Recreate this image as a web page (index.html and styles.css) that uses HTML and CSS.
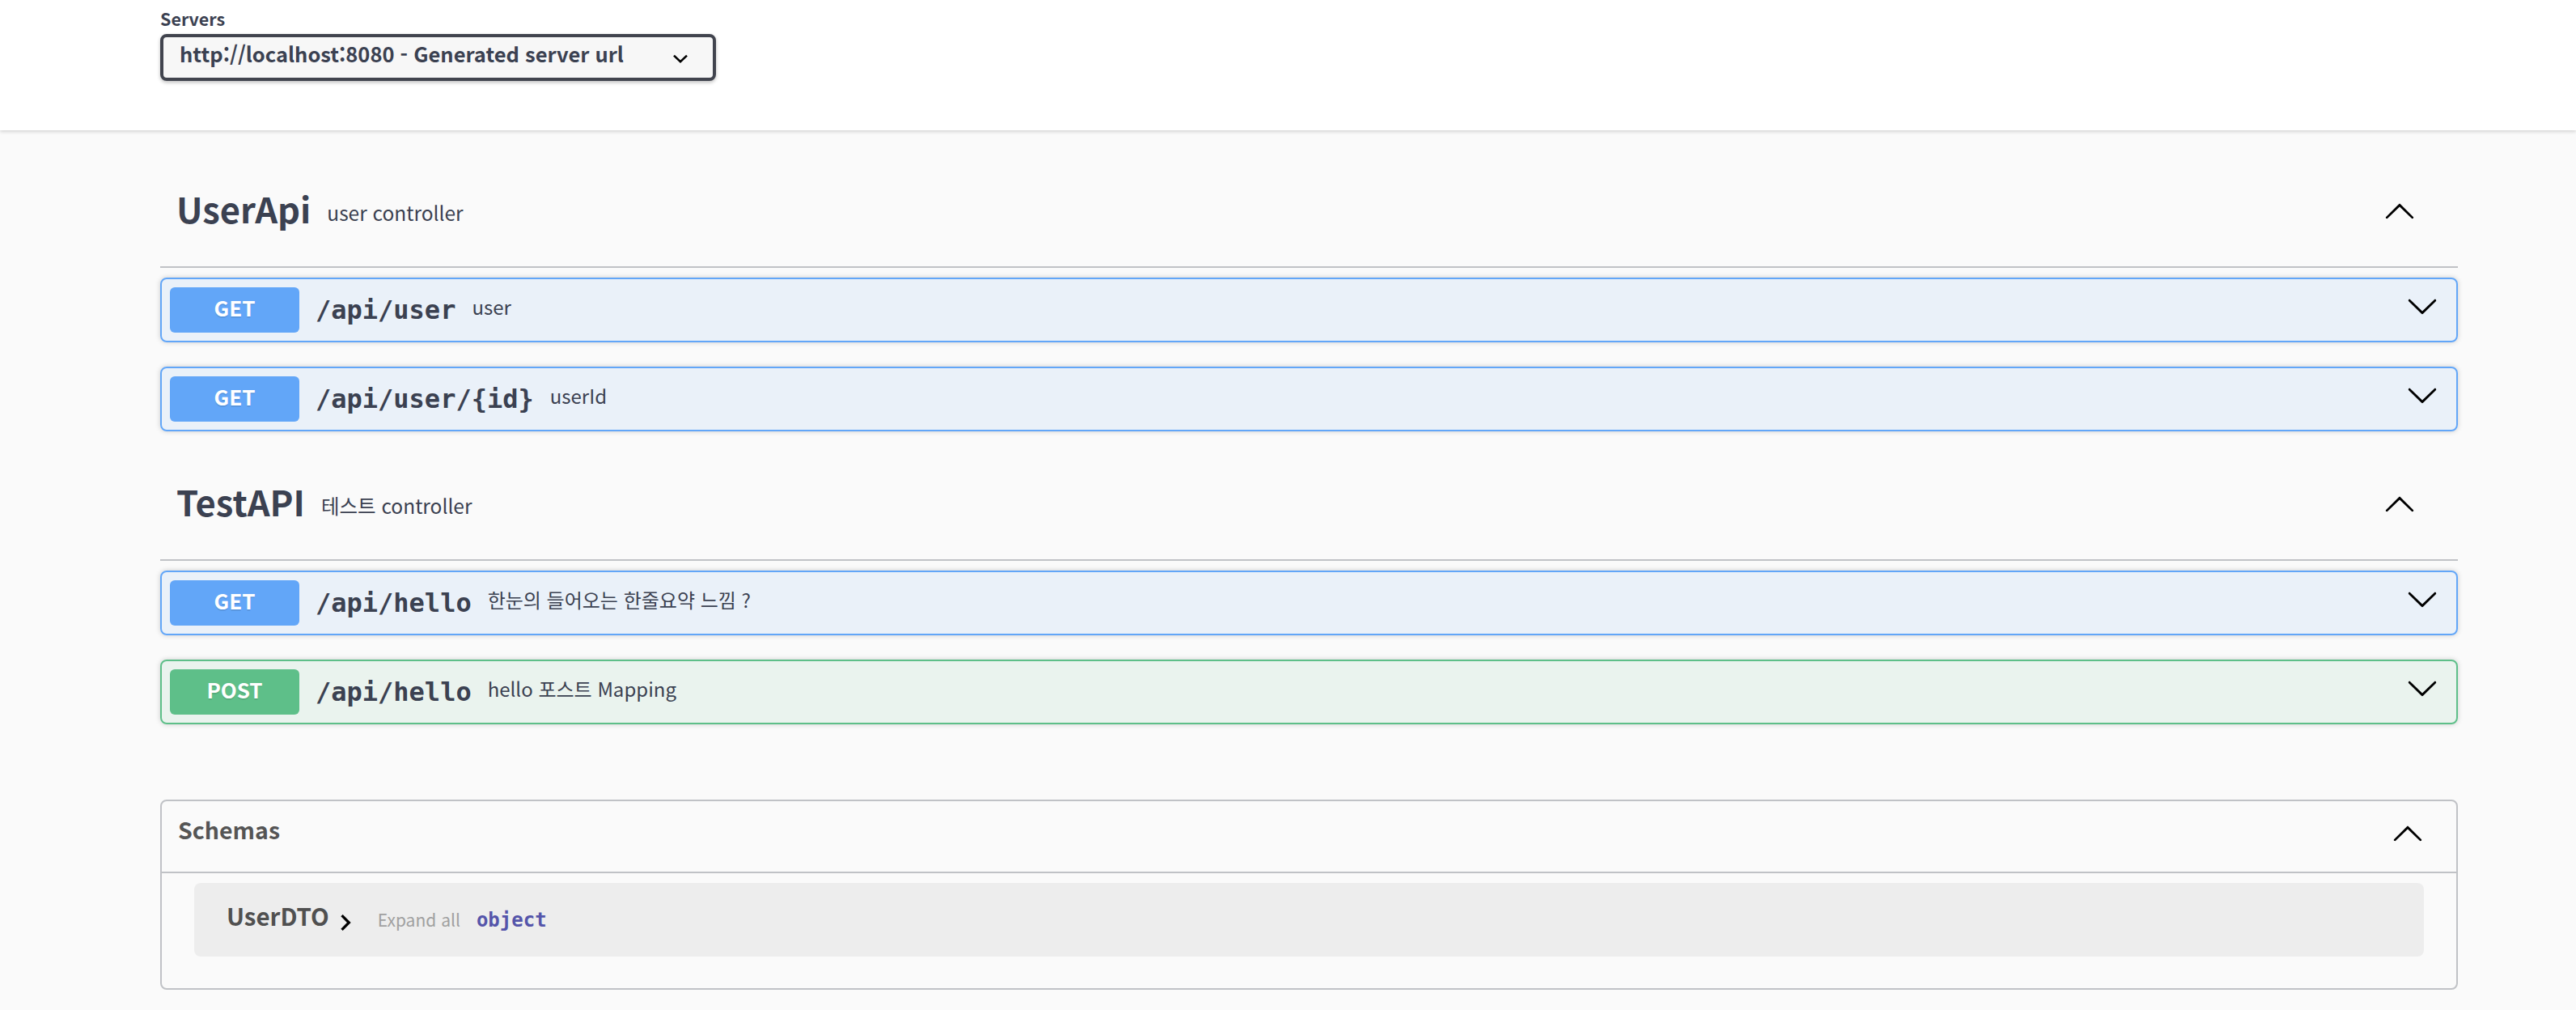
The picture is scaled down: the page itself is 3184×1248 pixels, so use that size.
FILE: index.html
```html
<!DOCTYPE html>
<html lang="ko">
<head>
<meta charset="utf-8">
<title>Swagger UI</title>
<link rel="stylesheet" href="styles.css">
</head>
<body>
<div class="scheme">
  <div class="wrap">
    <span class="servers-title">Servers</span>
    <div class="select">
      <span class="select-text">http://localhost:8080 - Generated server url</span>
      <svg class="select-arrow" viewBox="0 0 20 11"><polyline points="2,1.6 10,9.2 18,1.6" fill="none" stroke="#000" stroke-width="2.6"/></svg>
    </div>
  </div>
</div>

<div class="wrap main">
  <section class="tag-section">
    <h3 class="tag">
      <span class="tag-name">UserApi</span>
      <small class="tag-desc">user controller</small>
      <svg class="tag-toggle" viewBox="0 0 20 20"><path d="M17.418 14.908c.272.268.709.268.979 0s.271-.701 0-.969l-7.908-7.83c-.27-.268-.707-.268-.979 0l-7.908 7.83c-.27.268-.27.701 0 .969.271.268.709.268.979 0L10 7.767l7.418 7.141z"/></svg>
    </h3>
    <div class="opblock get">
      <div class="summary">
        <span class="method">GET</span>
        <span class="path">/api/user</span>
        <span class="desc">user</span>
        <svg class="op-arrow" viewBox="0 0 20 20"><path d="M17.418 6.109c.272-.268.709-.268.979 0s.271.701 0 .969l-7.908 7.83c-.27.268-.707.268-.979 0l-7.908-7.83c-.27-.268-.27-.701 0-.969.271-.268.709-.268.979 0L10 13.25l7.418-7.141z"/></svg>
      </div>
    </div>
    <div class="opblock get">
      <div class="summary">
        <span class="method">GET</span>
        <span class="path">/api/user/{id}</span>
        <span class="desc">userId</span>
        <svg class="op-arrow" viewBox="0 0 20 20"><path d="M17.418 6.109c.272-.268.709-.268.979 0s.271.701 0 .969l-7.908 7.83c-.27.268-.707.268-.979 0l-7.908-7.83c-.27-.268-.27-.701 0-.969.271-.268.709-.268.979 0L10 13.25l7.418-7.141z"/></svg>
      </div>
    </div>
  </section>

  <section class="tag-section">
    <h3 class="tag">
      <span class="tag-name">TestAPI</span>
      <small class="tag-desc">테스트 controller</small>
      <svg class="tag-toggle" viewBox="0 0 20 20"><path d="M17.418 14.908c.272.268.709.268.979 0s.271-.701 0-.969l-7.908-7.83c-.27-.268-.707-.268-.979 0l-7.908 7.83c-.27.268-.27.701 0 .969.271.268.709.268.979 0L10 7.767l7.418 7.141z"/></svg>
    </h3>
    <div class="opblock get">
      <div class="summary">
        <span class="method">GET</span>
        <span class="path">/api/hello</span>
        <span class="desc">한눈의 들어오는 한줄요약 느낌 ?</span>
        <svg class="op-arrow" viewBox="0 0 20 20"><path d="M17.418 6.109c.272-.268.709-.268.979 0s.271.701 0 .969l-7.908 7.83c-.27.268-.707.268-.979 0l-7.908-7.83c-.27-.268-.27-.701 0-.969.271-.268.709-.268.979 0L10 13.25l7.418-7.141z"/></svg>
      </div>
    </div>
    <div class="opblock post">
      <div class="summary">
        <span class="method">POST</span>
        <span class="path">/api/hello</span>
        <span class="desc">hello 포스트 Mapping</span>
        <svg class="op-arrow" viewBox="0 0 20 20"><path d="M17.418 6.109c.272-.268.709-.268.979 0s.271.701 0 .969l-7.908 7.83c-.27.268-.707.268-.979 0l-7.908-7.83c-.27-.268-.27-.701 0-.969.271-.268.709-.268.979 0L10 13.25l7.418-7.141z"/></svg>
      </div>
    </div>
  </section>

  <section class="models">
    <h4 class="models-title">
      <span class="models-name">Schemas</span>
      <svg class="models-toggle" viewBox="0 0 20 20"><path d="M17.418 14.908c.272.268.709.268.979 0s.271-.701 0-.969l-7.908-7.83c-.27-.268-.707-.268-.979 0l-7.908 7.83c-.27.268-.27.701 0 .969.271.268.709.268.979 0L10 7.767l7.418 7.141z"/></svg>
    </h4>
    <div class="models-body">
      <div class="model-container">
        <span class="model-title">UserDTO</span>
        <svg class="model-toggle" viewBox="0 0 24 24"><path d="M10 6L8.59 7.41 13.17 12l-4.58 4.59L10 18l6-6z"/></svg>
        <span class="expand-all">Expand all</span>
        <span class="prop-type">object</span>
      </div>
    </div>
  </section>
</div>
</body>
</html>
```

FILE: styles.css
```css
* { box-sizing: border-box; }

html, body {
  margin: 0;
  padding: 0;
}

body {
  background: #fafafa;
  color: #3b4151;
  font-family: "Noto Sans CJK KR", "Noto Sans", sans-serif;
  width: 3184px;
  height: 1248px;
  overflow: hidden;
}

.wrap {
  width: 2840px;
  margin-left: 198px;
}

/* ---------- servers bar ---------- */
.scheme {
  background: #fff;
  height: 161px;
  padding-top: 8px;
  box-shadow: 0 2px 4px 0 rgba(0, 0, 0, .15);
}

.servers-title {
  display: block;
  font-size: 21.5px;
  font-weight: 700;
  line-height: 30px;
}

.select {
  margin-top: 4px;
  width: 687px;
  height: 58px;
  border: 4px solid #41444e;
  border-radius: 8px;
  background: #f7f7f7;
  box-shadow: 0 2px 4px 0 rgba(0, 0, 0, .25);
  display: flex;
  align-items: flex-start;
  padding: 3px 0 0 20px;
}

.select-text {
  font-size: 25.5px;
  font-weight: 700;
  line-height: 34px;
}

.select-arrow {
  width: 20px;
  height: 11px;
  margin-left: auto;
  margin-right: 30px;
  align-self: center;
}

/* ---------- operations ---------- */
.main {
  display: flex;
  flex-direction: column;
  padding-top: 40px;
}

.tag-section {
  display: flex;
  flex-direction: column;
}

.tag {
  margin: 0 0 12px;
  height: 130px;
  padding: 0 40px 14px 20px;
  display: flex;
  align-items: center;
  border-bottom: 2px solid rgba(59, 65, 81, .3);
}

.tag-name {
  font-size: 43.5px;
  font-weight: 700;
  line-height: 60px;
}

.tag-desc {
  flex: 1;
  font-size: 24.5px;
  font-weight: 400;
  line-height: 34px;
  padding: 0 20px;
  margin-top: 9px;
}

.tag-toggle {
  width: 40px;
  height: 40px;
  margin-right: 12px;
  margin-top: 4px;
}

.opblock {
  margin-bottom: 30px;
  border: 2px solid;
  border-radius: 8px;
  box-shadow: 0 0 6px rgba(0, 0, 0, .19);
}

.opblock.get {
  background: rgba(97, 166, 248, .1);
  border-color: #62a6f8;
}

.opblock.post {
  background: rgba(94, 191, 137, .1);
  border-color: #5ebf89;
}

.summary {
  display: flex;
  align-items: center;
  padding: 10px;
}

.method {
  min-width: 160px;
  padding: 9px 0 15px;
  font-size: 26px;
  line-height: 32px;
  font-weight: 700;
  color: #fff;
  text-align: center;
  border-radius: 6px;
  text-shadow: 0 2px 0 rgba(0, 0, 0, .1);
}

.get .method { background: #62a6f8; }
.post .method { background: #5ebf89; }

.path {
  font-family: "DejaVu Sans Mono", monospace;
  font-size: 32px;
  font-weight: 700;
  padding: 0 20px;
}

.desc {
  flex: 1;
  font-size: 24px;
  margin-bottom: 9px;
}

.op-arrow {
  width: 40px;
  height: 40px;
  margin-right: 12px;
  margin-bottom: 10px;
}

/* ---------- schemas ---------- */
.models {
  margin-top: 63px;
  border: 2px solid rgba(59, 65, 81, .3);
  border-radius: 8px;
  padding-bottom: 39px;
}

.models-title {
  margin: 0;
  height: 89px;
  padding: 0 40px 18px 20px;
  display: flex;
  align-items: center;
  border-bottom: 2px solid rgba(59, 65, 81, .3);
  font-size: 28.5px;
  font-weight: 700;
  color: #555;
}

.models-name { flex: 1; }

.models-toggle {
  width: 40px;
  height: 40px;
  margin-top: 9px;
}

.models-body {
  padding-top: 12px;
}

.model-container {
  margin: 0 40px;
  height: 91px;
  padding-left: 40px;
  background: rgba(0, 0, 0, .05);
  border-radius: 8px;
  display: flex;
  align-items: center;
}

.model-title {
  font-size: 29.5px;
  font-weight: 600;
  color: #505050;
  margin-bottom: 11px;
}

.model-toggle {
  width: 40px;
  height: 40px;
  margin-top: 7px;
}

.expand-all {
  font-size: 21px;
  color: #a0a0a0;
  margin-left: 20px;
  margin-bottom: 2px;
}

.prop-type {
  font-family: "DejaVu Sans Mono", monospace;
  font-size: 24px;
  font-weight: 700;
  color: #55a;
  margin-left: 20px;
}
```
